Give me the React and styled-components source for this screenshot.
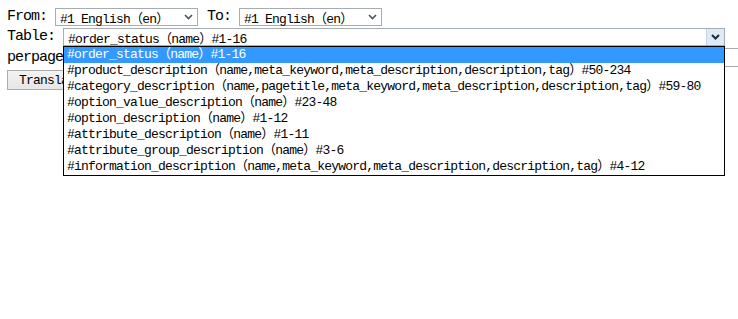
import React from 'react';
import styled, { createGlobalStyle } from 'styled-components';

const GlobalStyle = createGlobalStyle`
  body {
    margin: 0;
    min-height: 100vh;
    background: #fff;
    font-family: "Liberation Mono", "Noto Sans CJK SC", monospace;
    color: #000;
  }
`;

const Form = styled.form`
  padding: 8px 0 0 7px;
  display: flex;
  flex-direction: column;
`;

const Row = styled.div`
  display: flex;
  align-items: center;
  height: ${(p) => p.h || 18}px;
  margin-bottom: ${(p) => p.gap || 2}px;
`;

const Label = styled.span`
  font-size: 15px;
  letter-spacing: -1px;
  line-height: 18px;
  margin-right: ${(p) => p.mr || 8}px;
  margin-left: ${(p) => p.ml || 0}px;
  white-space: nowrap;
`;

const SelectBox = styled.div`
  position: relative;
  box-sizing: border-box;
  width: ${(p) => p.w}px;
  height: 18px;
  border: 1px solid #a5acb2;
  display: flex;
  align-items: center;
  background: #fff;
`;

const Value = styled.span`
  flex: 1;
  padding-left: 4px;
  font-size: 13px;
  letter-spacing: -0.8px;
  white-space: nowrap;
  overflow: hidden;
`;

const Arrow = styled.span`
  width: 17px;
  height: 16px;
  display: flex;
  align-items: center;
  justify-content: center;
  background: ${(p) => (p.active ? '#dfeaf7' : 'transparent')};
  border-left: 1px solid ${(p) => (p.active ? '#c2d4ea' : 'transparent')};
  color: ${(p) => (p.active ? '#1b2a3c' : '#4d5257')};
`;

const List = styled.ul`
  position: absolute;
  top: 17px;
  left: -1px;
  box-sizing: border-box;
  width: ${(p) => p.w}px;
  margin: 0;
  padding: 0;
  list-style: none;
  border: 1px solid #000;
  background: #fff;
  z-index: 2;
`;

const Option = styled.li`
  height: 16px;
  line-height: 16px;
  padding-left: 3px;
  font-size: 13px;
  letter-spacing: -0.8px;
  white-space: nowrap;
  background: ${(p) => (p.selected ? '#3399ff' : '#fff')};
  color: ${(p) => (p.selected ? '#fff' : '#000')};
`;

const TextInput = styled.div`
  box-sizing: border-box;
  flex: 1;
  height: 19px;
  border: 1px solid #a5acb2;
  border-right: none;
`;

const Button = styled.button`
  box-sizing: border-box;
  height: 20px;
  padding: 0 11px;
  margin: 0;
  border: 1px solid #acacac;
  border-radius: 0;
  background: linear-gradient(#f3f3f3, #e6e6e6);
  font-family: "Liberation Mono", monospace;
  font-size: 13px;
  letter-spacing: -0.8px;
  color: #000;
`;

const Chevron = ({ bold }) => (
  <svg width="9" height="6" viewBox="0 0 9 6">
    <path
      d="M1 1 L4.5 4.5 L8 1"
      fill="none"
      stroke="currentColor"
      strokeWidth={bold ? 2 : 1.6}
    />
  </svg>
);

const tables = [
  '#order_status（name）#1-16',
  '#product_description（name,meta_keyword,meta_description,description,tag）#50-234',
  '#category_description（name,pagetitle,meta_keyword,meta_description,description,tag）#59-80',
  '#option_value_description（name）#23-48',
  '#option_description（name）#1-12',
  '#attribute_description（name）#1-11',
  '#attribute_group_description（name）#3-6',
  '#information_description（name,meta_keyword,meta_description,description,tag）#4-12',
];

function App() {
  return (
    <>
      <GlobalStyle />
      <Form onSubmit={(e) => e.preventDefault()}>
        <Row>
          <Label>From:</Label>
          <SelectBox w={143}>
            <Value>#1 English（en）</Value>
            <Arrow>
              <Chevron />
            </Arrow>
          </SelectBox>
          <Label ml={9}>To:</Label>
          <SelectBox w={143}>
            <Value>#1 English（en）</Value>
            <Arrow>
              <Chevron />
            </Arrow>
          </SelectBox>
        </Row>
        <Row>
          <Label>Table:</Label>
          <SelectBox w={662}>
            <Value>{tables[0]}</Value>
            <Arrow active>
              <Chevron bold />
            </Arrow>
            <List w={662}>
              {tables.map((t, i) => (
                <Option key={i} selected={i === 0}>
                  {t}
                </Option>
              ))}
            </List>
          </SelectBox>
        </Row>
        <Row h={19} gap={3}>
          <Label>perpage:</Label>
          <TextInput />
        </Row>
        <Row h={20}>
          <Button type="submit">Translate</Button>
        </Row>
      </Form>
    </>
  );
}

export default App;
